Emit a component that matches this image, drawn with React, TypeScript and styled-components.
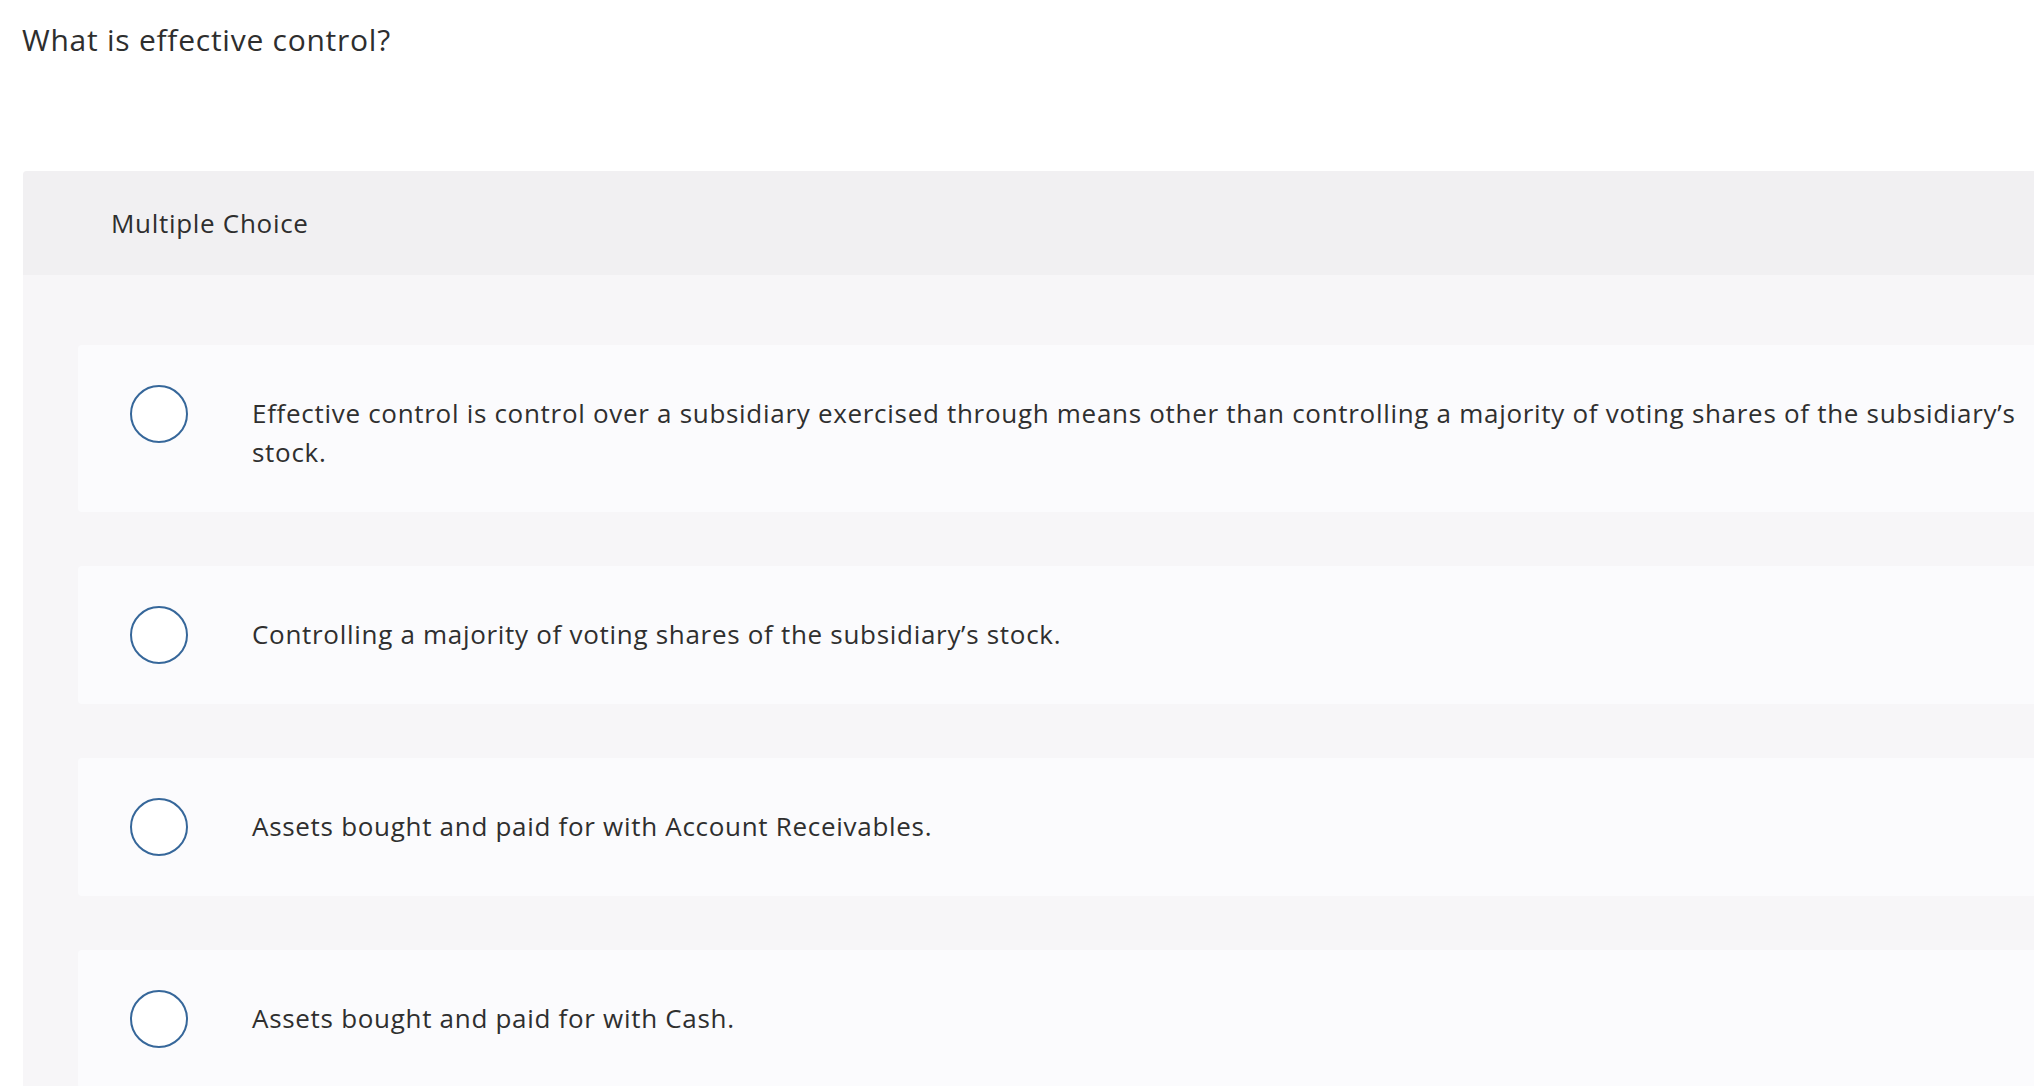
import React from 'react';
import styled, { createGlobalStyle } from 'styled-components';

const GlobalStyle = createGlobalStyle`
  html, body {
    margin: 0;
    padding: 0;
    background: #ffffff;
    overflow: hidden;
  }
  body {
    font-family: 'Open Sans', 'Liberation Sans', Arial, sans-serif;
    color: #333333;
  }
`;

const Page = styled.div`
  width: 100%;
  min-height: 1086px;
  padding-left: 23px;
  box-sizing: border-box;
  overflow: hidden;
`;

const Question = styled.h1`
  margin: 0;
  padding: 20px 0 0 0;
  margin-left: -1px;
  font-size: 30px;
  line-height: 40px;
  font-weight: 400;
  letter-spacing: 0.75px;
  color: #2e2e2e;
`;

const Card = styled.section`
  margin-top: 111px;
  margin-right: -60px;
  border-radius: 4px 0 0 0;
  background: #f7f6f8;
  overflow: hidden;
`;

const CardHeader = styled.div`
  height: 104px;
  display: flex;
  align-items: center;
  padding-left: 88px;
  background: #f1f0f2;
  font-size: 26px;
  letter-spacing: 0.7px;
  color: #2e2e2e;
`;

const Choices = styled.div`
  display: flex;
  flex-direction: column;
  gap: 54px;
  padding: 70px 0 60px 55px;
`;

const Choice = styled.label`
  display: flex;
  align-items: flex-start;
  padding: 40px 54px 40px 52px;
  background: #fbfbfd;
  border-radius: 4px 0 0 4px;
  cursor: pointer;
`;

const Radio = styled.span`
  flex: 0 0 auto;
  width: 58px;
  height: 58px;
  box-sizing: border-box;
  border: 2.5px solid #36679a;
  border-radius: 50%;
  background: #ffffff;
`;

const ChoiceText = styled.span`
  flex: 1;
  margin-left: 64px;
  padding-top: 9px;
  font-size: 26px;
  line-height: 39px;
  letter-spacing: 0.7px;
  color: #2f2f2f;
`;

const choices = [
  "Effective control is control over a subsidiary exercised through means other than controlling a majority of voting shares of the subsidiary\u2019s stock.",
  "Controlling a majority of voting shares of the subsidiary\u2019s stock.",
  'Assets bought and paid for with Account Receivables.',
  'Assets bought and paid for with Cash.',
];

export default function App() {
  return (
    <>
      <GlobalStyle />
      <Page>
        <Question>What is effective control?</Question>
        <Card>
          <CardHeader>Multiple Choice</CardHeader>
          <Choices>
            {choices.map((text) => (
              <Choice key={text}>
                <Radio />
                <ChoiceText>{text}</ChoiceText>
              </Choice>
            ))}
          </Choices>
        </Card>
      </Page>
    </>
  );
}
